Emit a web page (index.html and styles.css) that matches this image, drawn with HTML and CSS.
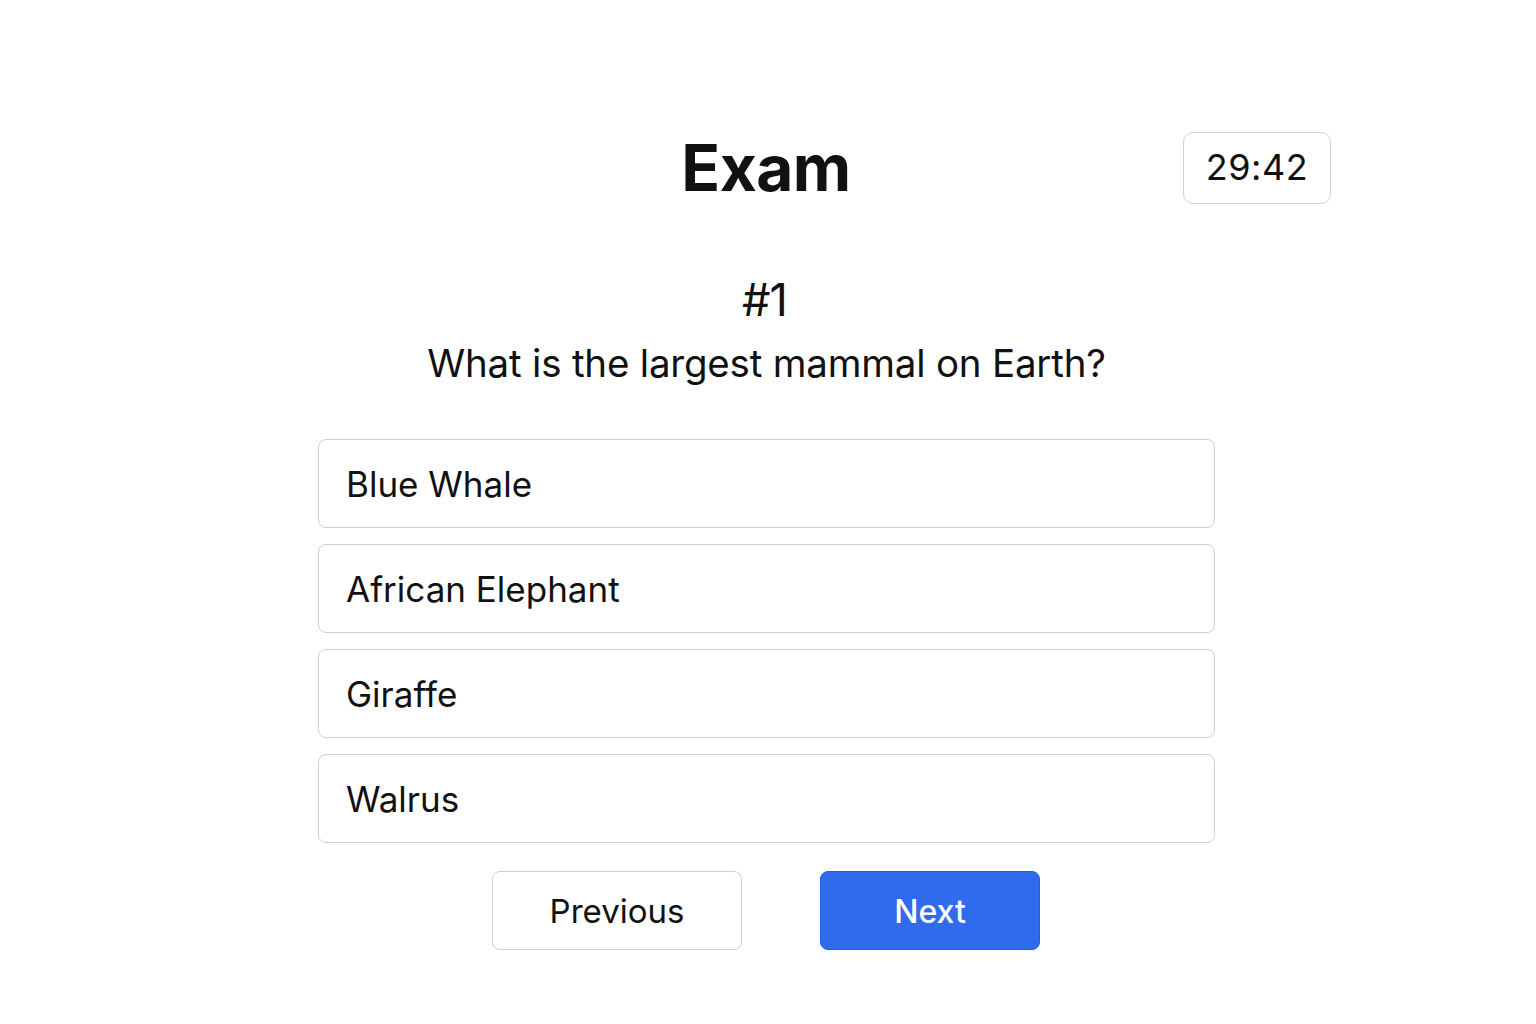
FILE: index.html
```html
<!DOCTYPE html>
<html>
<head>
<meta charset="utf-8">
<link rel="stylesheet" href="styles.css">
</head>
<body>
<div class="page">
  <header class="header">
    <div class="spacer"></div>
    <h1 class="title">Exam</h1>
    <div class="timer-wrap"><div class="timer">29:42</div></div>
  </header>
  <section class="question">
    <div class="qnum">#1</div>
    <div class="qtext">What is the largest mammal on Earth?</div>
  </section>
  <div class="options">
    <div class="option">Blue Whale</div>
    <div class="option">African Elephant</div>
    <div class="option">Giraffe</div>
    <div class="option">Walrus</div>
  </div>
  <div class="nav">
    <button class="btn btn-prev">Previous</button>
    <button class="btn btn-next">Next</button>
  </div>
</div>
</body>
</html>
```
FILE: styles.css
```css
* { box-sizing: border-box; }
html, body { margin: 0; padding: 0; background: #fff; }
body { font-family: Inter, "Noto Sans", sans-serif; color: #111; }
.page { width: 1536px; height: 1024px; display: flex; flex-direction: column; align-items: center; }
.header { width: 1126px; margin-top: 132px; display: grid; grid-template-columns: 1fr auto 1fr; align-items: center; }
.title { margin: 0 0 0 -4px; font-size: 64px; font-weight: 700; letter-spacing: -0.5px; line-height: 72px; color: #111; }
.timer-wrap { display: flex; justify-content: flex-end; }
.timer { width: 148px; height: 72px; border: 1px solid #d4d4d4; border-radius: 10px; display: flex; align-items: center; justify-content: center; font-size: 36px; letter-spacing: 0.5px; color: #111; padding-bottom: 2px; }
.question { margin-top: 68px; display: flex; flex-direction: column; align-items: center; }
.qnum { font-size: 45px; line-height: 56px; letter-spacing: -1px; padding-right: 7px; }
.qtext { margin-top: 11px; font-size: 38.5px; line-height: 48px; letter-spacing: -0.2px; padding-right: 3px; }
.options { margin-top: 52px; width: 897px; margin-left: -3px; display: flex; flex-direction: column; gap: 16px; }
.option { height: 89px; border: 1px solid #d0d0d0; border-radius: 8px; padding: 0 27px; display: flex; align-items: center; font-size: 35px; color: #111; }
.nav { margin-top: 28px; display: flex; gap: 78px; margin-left: -4px; }
.btn { height: 79px; border-radius: 8px; font-family: inherit; font-size: 33px; display: flex; align-items: center; justify-content: center; }
.btn-prev { width: 250px; background: #fff; border: 1px solid #d0d0d0; color: #111; padding-top: 2px; }
.btn-next { width: 220px; background: #316bed; border: 1px solid #1f5ae8; color: #fff; font-weight: 500; padding-top: 2px; font-size: 32px; }
```
